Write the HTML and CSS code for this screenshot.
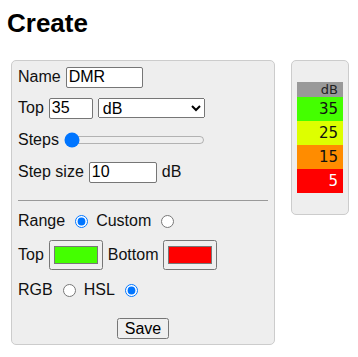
FILE: index.html
```html
<!DOCTYPE html>
<html>
<head>
<title>Create</title>
<link rel="stylesheet" href="styles.css">
</head>
<body>
<h1>Create</h1>
<div class="layout">
    <div class="panel form-panel">
        <div class="row row-name">Name <input type="text" class="name-input" value="DMR"></div>
        <div class="row">Top <input type="text" class="top-input" value="35"> <select class="unit-select"><option>dB</option></select></div>
        <div class="row">Steps <input type="range" class="steps" min="1" max="20" value="1"></div>
        <div class="row">Step size <input type="text" class="size-input" value="10"> dB</div>
        <hr>
        <div class="row row-range">Range <input type="radio" name="mode" checked> Custom <input type="radio" name="mode"></div>
        <div class="row row-colors">Top <input type="color" value="#44ff00"> Bottom <input type="color" value="#ff0000"></div>
        <div class="row">RGB <input type="radio" name="space"> HSL <input type="radio" name="space" checked></div>
        <div class="actions"><button>Save</button></div>
    </div>
    <div class="panel legend-panel">
        <div class="legend">
            <div class="legend-head">dB</div>
            <div class="legend-cell c35">35</div>
            <div class="legend-cell c25">25</div>
            <div class="legend-cell c15">15</div>
            <div class="legend-cell c5">5</div>
        </div>
    </div>
</div>
</body>
</html>
```
FILE: styles.css
```css
body {
    font-family: "Liberation Sans", Arial, sans-serif;
    font-size: 16px;
    margin: 8px 7px;
    color: #111;
}

h1 {
    font-size: 26px;
    margin: 0 0 21px 0;
    color: #000;
}

.layout {
    display: flex;
    align-items: flex-start;
    gap: 16px;
    padding-left: 4px;
}

.panel {
    background-color: #eee;
    border: 1px solid #ccc;
    border-radius: 5px;
}

.form-panel {
    width: 250px;
    padding: 5px 6px;
}

.row {
    display: flex;
    align-items: center;
    gap: 5px;
    height: 22px;
    margin-bottom: 10px;
}

.row-name { margin-bottom: 9px; }
.row-range { margin-bottom: 8px; }
.row-colors { height: 30px; margin-bottom: 9px; }

input, select, button {
    font-family: inherit;
    font-size: 16px;
}

input[type="text"] {
    padding: 1px 2px;
    border: 1px solid #767676;
    border-radius: 2px;
    box-sizing: border-box;
    height: 21px;
}

.name-input { width: 77px; }
.top-input { width: 44px; }
.size-input { width: 68px; }

.unit-select {
    width: 107px;
    height: 20px;
}

.steps {
    width: 141px;
    margin: 0;
}

input[type="radio"] {
    margin: 0 3px 0 5px;
}

input[type="color"] {
    width: 54px;
    height: 30px;
    margin: 0;
}

hr {
    border: none;
    border-top: 1px solid #999;
    margin: 17px 0 9px 0;
}

.actions {
    text-align: center;
    margin-top: 17px;
}

button {
    padding: 0 6px;
    height: 21px;
}

.legend-panel {
    padding: 21px 5px;
}

.legend {
    width: 46px;
    font-family: "DejaVu Sans", sans-serif;
    font-size: 15px;
    text-align: right;
}

.legend-head {
    background-color: #999;
    color: #222;
    font-size: 13px;
    height: 15px;
    line-height: 15px;
    padding-right: 5px;
}

.legend-cell {
    height: 24px;
    line-height: 24px;
    padding-right: 5px;
    color: #111;
}

.c35 { background-color: #44ff00; }
.c25 { background-color: #ddff00; }
.c15 { background-color: #ff8c00; }
.c5 { background-color: #ff0000; color: #fff; }
```
